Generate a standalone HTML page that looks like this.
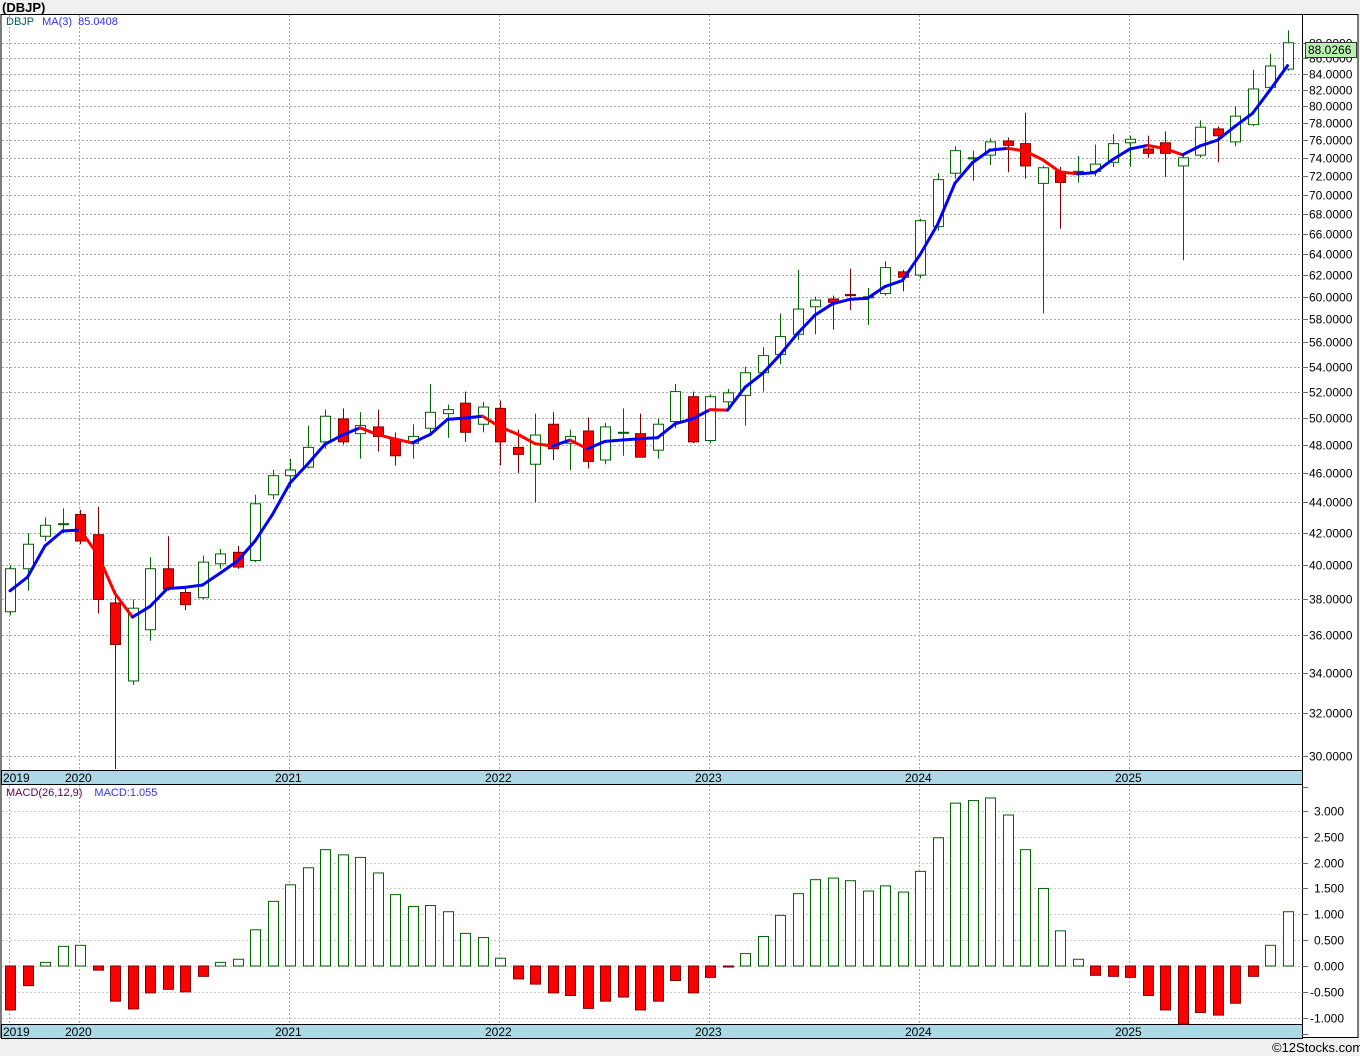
<!DOCTYPE html>
<html><head><meta charset="utf-8"><style>
html,body{margin:0;padding:0;background:#f0f0f0;width:1360px;height:1056px;overflow:hidden;font-family:"Liberation Sans",sans-serif}
svg{position:absolute;left:0;top:0}
</style></head><body>
<svg id="s" width="1360" height="1056" xmlns="http://www.w3.org/2000/svg" font-family="Liberation Sans, sans-serif"></svg>
<script>
const S=document.getElementById('s');let h='';
h+='<text x="2" y="12" font-size="13" font-weight="bold">(DBJP)</text>';
h+='<rect x="1" y="14.5" width="1357" height="1023" fill="#fff" stroke="#000"/>';
h+='<line x1="1302.5" y1="14" x2="1302.5" y2="1038" stroke="#000"/>';
const py=p=>43+(Math.log(88)-Math.log(p))*662.6;
for(let v=30;v<=88;v+=2){const y=Math.round(py(v))+.5;
 h+=`<line x1="2" y1="${y}" x2="1302" y2="${y}" stroke="#aaa" stroke-dasharray="2,2"/>`;
 h+=`<line x1="1302" y1="${y}" x2="1308" y2="${y}" stroke="#666"/>`;
 h+=`<text x="1309" y="${y+4}" font-size="12" fill="#000">${v.toFixed(4)}</text>`;}
const vl=[9,79,289,499,709,919,1129];
vl.forEach(x=>{h+=`<line x1="${x+.5}" y1="15" x2="${x+.5}" y2="770" stroke="#aaa" stroke-dasharray="2,2"/><line x1="${x+.5}" y1="785" x2="${x+.5}" y2="1024" stroke="#aaa" stroke-dasharray="2,2"/>`;});
[770,1024].forEach(y=>{h+=`<rect x="1.5" y="${y+.5}" width="1301" height="14" fill="#add8e6" stroke="#000"/>`;
 const lb=[[3,'2019'],[65,'2020'],[275,'2021'],[485,'2022'],[695,'2023'],[905,'2024'],[1115,'2025']];
 lb.forEach(([x,t])=>h+=`<text x="${x}" y="${y+12}" font-size="12">${t}</text>`);});
const D=[[37.3,39.8,40,37.1],[39.8,41.3,42,38.5],[41.8,42.5,43,41.5],[42.6,42.6,43.6,42],[43.2,41.5,43.5,41.3],[41.9,38,43.7,37.2],[37.8,35.5,38.5,29],[33.6,37.5,38,33.4],[36.3,39.8,40.5,35.7],[39.8,38.6,41.8,38.5],[38.4,37.7,38.6,37.4],[38.1,40.2,40.6,38],[40.1,40.7,41,39.8],[40.8,39.9,41.2,39.8],[40.3,43.9,44.5,40.2],[44.5,45.8,46.2,44.2],[45.8,46.2,47,45],[46.4,47.8,49.4,46.3],[48.2,50.1,50.6,47.7],[49.9,48.2,50.7,48],[48.8,49.4,50.4,47],[49.3,48.6,50.6,47.5],[48.4,47.2,48.9,46.5],[48.1,48.6,49.5,47],[49.2,50.4,52.6,48.8],[50.3,50.6,51,48.5],[51.1,48.9,52,48.2],[49.5,50.8,51.2,48.9],[50.7,48.2,51.3,46.5],[47.8,47.3,49.1,46],[46.6,48.7,50.3,44],[49.5,47.7,50.4,46.9],[48.1,48.6,49.1,46.2],[49,46.8,50,46.3],[46.9,49.3,49.6,46.6],[48.9,48.9,50.7,47.2],[48.8,47.1,50.3,47.1],[47.6,49.5,49.9,47],[49.7,52,52.6,49.2],[51.6,48.2,52,48.1],[48.3,51.6,51.8,48.1],[51.2,51.9,52.2,50.6],[51.7,53.5,54,49.4],[53.5,54.9,55.6,52],[55,56.5,58.5,54.2],[56.7,58.9,62.5,56.2],[59.1,59.7,60,56.7],[59.8,59.5,60.1,57.1],[60.2,60.1,62.6,58.8],[60,60,60.8,57.5],[60.3,62.7,63.3,60.1],[62.3,61.8,62.5,60.5],[62,67.3,67.5,61.7],[66.7,71.6,72.3,66.3],[72.3,74.8,75.3,71.7],[74,74,74.8,71.5],[74.3,75.8,76.2,73.2],[75.9,75.4,76.3,72.4],[75.6,73.1,79.2,71.7],[71.2,72.9,73.1,58.5],[72.5,71.3,73,66.5],[72.4,72.5,74.2,71.3],[72.5,73.3,75.5,72],[73.5,75.6,76.7,73],[75.7,76.1,76.5,73],[75,74.5,76.5,74],[75.7,74.5,77,71.9],[73.1,74,74.5,63.4],[74.3,77.5,78.3,74],[77.3,76.5,77.6,73.5],[75.8,78.8,80,75.3],[77.8,82.1,84.5,77.6],[82.3,85,86.6,82],[84.6,88.03,89.7,84.4]];
const X=i=>10+17.5*i;
D.forEach(([o,c,hi,lo],i)=>{const x=Math.round(X(i))+.5;const up=c>=o;const col=up?'#006400':'#800000';
 const yl=Math.min(py(lo),769);
 h+=`<line x1="${x}" y1="${py(hi)}" x2="${x}" y2="${yl}" stroke="${col}"/>`;
 let t=py(Math.max(o,c)),b=py(Math.min(o,c));if(b-t<1)b=t+1;
 h+=`<rect x="${x-5}" y="${t}" width="10" height="${b-t}" fill="${up?'#fff':'#f00'}" stroke="${col}"/>`;});
const ma=D.map((d,i)=>{let s=0,n=0;for(let k=Math.max(0,i-2);k<=i;k++){s+=D[k][1];n++;}return s/n;});
ma[0]=38.5;ma[1]=39.3;
for(let i=1;i<ma.length;i++){const c=ma[i]>=ma[i-1]?'#0000ff':'#ff0000';
 h+=`<line x1="${X(i-1)}" y1="${py(ma[i-1])}" x2="${X(i)}" y2="${py(ma[i])}" stroke="${c}" stroke-width="3" stroke-linecap="round"/>`;}
h+='<text x="6" y="25" font-size="11"><tspan fill="#006060">DBJP</tspan><tspan fill="#3030ff" dx="8">MA(3)</tspan><tspan fill="#3030ff" dx="6">85.0408</tspan></text>';
h+='<rect x="1305.5" y="42.5" width="51" height="15" fill="#b8f0b0" stroke="#333"/><text x="1308" y="54" font-size="12">88.0266</text>';
const my=v=>966-v*51.7;
[3,2.5,2,1.5,1,.5,0,-.5,-1].forEach(v=>{const y=Math.round(my(v))+.5;
 h+=`<line x1="2" y1="${y}" x2="1302" y2="${y}" stroke="#ccc" stroke-dasharray="2,2"/><line x1="1302" y1="${y}" x2="1308" y2="${y}" stroke="#666"/><text x="${v<0?1310:1314}" y="${y+4}" font-size="12">${v.toFixed(3)}</text>`;});
[787,1034].forEach(y=>h+=`<line x1="1302" y1="${y+.5}" x2="1308" y2="${y+.5}" stroke="#666"/>`);
const M=[-.85,-.38,.07,.38,.4,-.08,-.68,-.83,-.52,-.45,-.5,-.2,.07,.13,.7,1.25,1.57,1.9,2.25,2.15,2.1,1.8,1.38,1.15,1.17,1.05,.63,.55,.15,-.25,-.35,-.52,-.57,-.82,-.68,-.6,-.85,-.68,-.28,-.52,-.22,-.02,.24,.57,.98,1.4,1.67,1.7,1.65,1.45,1.55,1.43,1.83,2.48,3.15,3.2,3.25,2.92,2.25,1.5,.68,.13,-.18,-.2,-.22,-.57,-.85,-1.2,-.9,-.95,-.72,-.2,.4,1.05];
M.forEach((v,i)=>{const x=Math.round(X(i))+.5;const t=Math.min(my(v),966),b=Math.min(Math.max(my(v),966),1024);
 h+=`<rect x="${x-5}" y="${t}" width="10" height="${Math.max(b-t,1)}" fill="${v>=0?'#fff':'#f00'}" stroke="${v>=0?'#006400':'#800000'}"/>`;});
h+='<text x="6" y="796" font-size="11"><tspan fill="#600060">MACD(26,12,9)</tspan><tspan fill="#3030ff" dx="12">MACD:1.055</tspan></text>';
h+='<text x="1272" y="1052" font-size="13">©12Stocks.com</text>';
S.innerHTML=h;
</script>
</body></html>
